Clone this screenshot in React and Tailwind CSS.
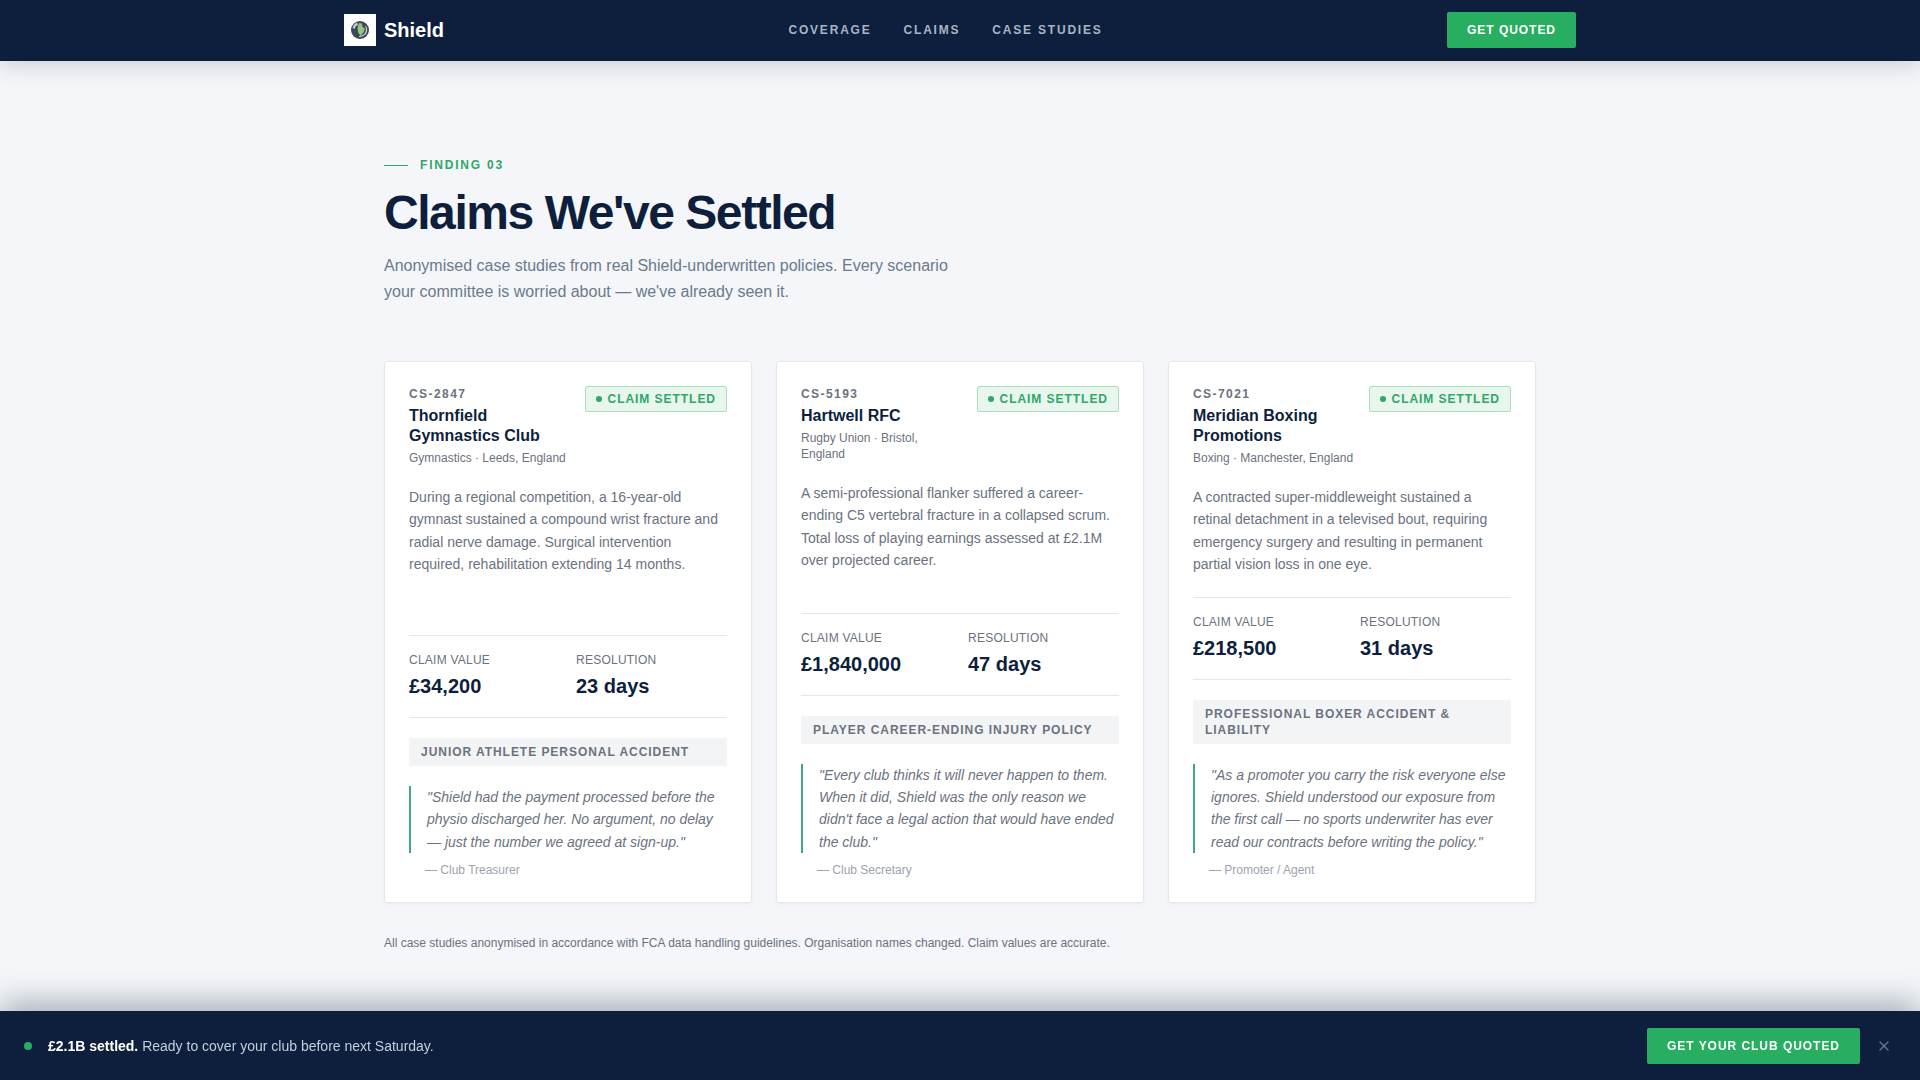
import React from 'react';
import { X } from 'lucide-react';

const cases = [
  {
    id: 'CS-2847',
    club: 'Thornfield Gymnastics Club',
    meta: 'Gymnastics · Leeds, England',
    summary: 'During a regional competition, a 16-year-old gymnast sustained a compound wrist fracture and radial nerve damage. Surgical intervention required, rehabilitation extending 14 months.',
    value: '£34,200',
    days: '23 days',
    policy: 'Junior Athlete Personal Accident',
    quote: '"Shield had the payment processed before the physio discharged her. No argument, no delay — just the number we agreed at sign-up."',
    who: '— Club Treasurer',
  },
  {
    id: 'CS-5193',
    club: 'Hartwell RFC',
    meta: 'Rugby Union · Bristol, England',
    summary: 'A semi-professional flanker suffered a career-ending C5 vertebral fracture in a collapsed scrum. Total loss of playing earnings assessed at £2.1M over projected career.',
    value: '£1,840,000',
    days: '47 days',
    policy: 'Player Career-Ending Injury Policy',
    quote: '"Every club thinks it will never happen to them. When it did, Shield was the only reason we didn\'t face a legal action that would have ended the club."',
    who: '— Club Secretary',
  },
  {
    id: 'CS-7021',
    club: 'Meridian Boxing Promotions',
    meta: 'Boxing · Manchester, England',
    summary: 'A contracted super-middleweight sustained a retinal detachment in a televised bout, requiring emergency surgery and resulting in permanent partial vision loss in one eye.',
    value: '£218,500',
    days: '31 days',
    policy: 'Professional Boxer Accident & Liability',
    quote: '"As a promoter you carry the risk everyone else ignores. Shield understood our exposure from the first call — no sports underwriter has ever read our contracts before writing the policy."',
    who: '— Promoter / Agent',
  },
];

function Logo() {
  return (
    <div className="flex h-8 w-8 items-center justify-center bg-white">
      <svg viewBox="0 0 20 20" className="h-[20px] w-[20px]">
        <circle cx="10" cy="10" r="9" fill="#3d4857" />
        <path d="M2.5 8 A8 8 0 0 1 7 2.5 L8 5 Q5 6 4.8 9 Z" fill="#c5cad1" />
        <path d="M15 6 Q17 9 15 13 Q13 16 9 16 L9 17 Q14 17 16.5 13 Q18 9 16 6 Z" fill="#ffffff" opacity="0.75" />
        <path d="M9 3 L12 3.5 L12.5 7 L15 8.5 L13.5 12.5 L10.5 16 L8 12 L7.5 8 Z" fill="#95c47f" />
      </svg>
    </div>
  );
}

function CaseCard({ item }) {
  return (
    <article className="flex flex-col rounded-[3px] border border-[#e5e7eb] bg-white p-6 shadow-[0_1px_3px_rgba(13,31,60,0.04)]">
      <header className="flex items-start justify-between gap-3">
        <div>
          <div className="text-xs leading-4 font-bold tracking-[0.12em] text-[#6b7280]">{item.id}</div>
          <h3 className="mt-1 text-base leading-5 font-bold text-[#0d1f3c]">{item.club}</h3>
          <p className="mt-1 text-xs leading-4 text-[#6b7280]">{item.meta}</p>
        </div>
        <span className="flex h-[26px] shrink-0 items-center gap-1.5 rounded-[2px] border border-[#a9dfc0] bg-[#e8f6ee] px-2.5 text-xs font-bold tracking-[0.08em] whitespace-nowrap text-[#2ea866]">
          <span className="h-1.5 w-1.5 rounded-full bg-[#2ea866]" />
          CLAIM SETTLED
        </span>
      </header>

      <p className="mt-5 mb-[21px] flex-1 text-sm leading-[22.4px] text-[#6b7280]">{item.summary}</p>

      <div className="grid grid-cols-2 gap-4 border-y border-[#e5e7eb] pt-4 pb-[17px]">
        <div>
          <div className="text-xs leading-4 tracking-[0.02em] text-[#6b7280] uppercase">Claim Value</div>
          <div className="mt-1 text-xl leading-7 font-bold text-[#0d1f3c]">{item.value}</div>
        </div>
        <div>
          <div className="text-xs leading-4 tracking-[0.02em] text-[#6b7280] uppercase">Resolution</div>
          <div className="mt-1 text-xl leading-7 font-bold text-[#0d1f3c]">{item.days}</div>
        </div>
      </div>

      <div className="mt-5 rounded-[2px] bg-[#f3f4f6] px-3 py-1.5 text-xs leading-4 font-bold tracking-[0.08em] text-[#6b7280] uppercase">
        {item.policy}
      </div>

      <blockquote className="mt-5 border-l-2 border-[#45a585] pl-4 text-sm leading-[22.4px] text-[#6b7280] italic">
        {item.quote}
      </blockquote>
      <p className="mt-[9px] pl-4 text-xs leading-4 text-[#9ca3af]">{item.who}</p>
    </article>
  );
}

export default function App() {
  return (
    <div className="min-h-screen bg-[#f4f6f9] font-['Liberation_Sans',Arial,sans-serif]">
      <nav className="sticky top-0 z-20 border-b border-[#0a1a33] bg-[#0d1f3c] shadow-[0_4px_24px_rgba(13,31,60,0.18)]">
        <div className="mx-auto flex h-[60px] max-w-[1232px] items-center justify-between">
          <div className="flex items-center gap-2">
            <Logo />
            <span className="text-xl font-bold text-white">Shield</span>
          </div>
          <div className="flex items-center gap-8 text-xs font-bold tracking-[0.15em] text-[#a9b4c4]">
            <a href="#coverage">COVERAGE</a>
            <a href="#claims">CLAIMS</a>
            <a href="#cases">CASE STUDIES</a>
          </div>
          <button className="h-9 rounded-[2px] bg-[#27ae60] px-5 text-xs font-bold tracking-[0.08em] text-white">GET QUOTED</button>
        </div>
      </nav>

      <main className="mx-auto max-w-[1152px] pt-[96px] pb-[130px]">
        <div className="flex items-center gap-3 text-xs leading-4 font-bold tracking-[0.15em] text-[#2ea866]">
          <span className="h-px w-6 bg-[#2ea866]" />
          FINDING 03
        </div>
        <h1 className="mt-[11px] text-5xl leading-[58px] font-bold tracking-[-0.03em] text-[#0d1f3c]">Claims We've Settled</h1>
        <p className="mt-[11px] max-w-[580px] text-base leading-[26px] text-[#6b7a8d]">
          Anonymised case studies from real Shield-underwritten policies. Every scenario your committee is worried about — we've already seen it.
        </p>

        <section className="mt-14 grid grid-cols-3 gap-6">
          {cases.map((item) => (
            <CaseCard key={item.id} item={item} />
          ))}
        </section>

        <p className="mt-8 text-xs leading-4 text-[#6b7280]">
          All case studies anonymised in accordance with FCA data handling guidelines. Organisation names changed. Claim values are accurate.
        </p>
      </main>

      <div className="fixed inset-x-0 bottom-0 z-30 flex h-[69px] items-center justify-between bg-[#0d1f3c] px-6 shadow-[0_-8px_32px_rgba(13,31,60,0.35)]">
        <div className="flex items-center gap-4 text-sm text-[#c3cddb]">
          <span className="h-2 w-2 rounded-full bg-[#27ae60]" />
          <span>
            <strong className="font-bold text-white">£2.1B settled.</strong> Ready to cover your club before next Saturday.
          </span>
        </div>
        <div className="flex items-center gap-3">
          <button className="h-9 rounded-[2px] bg-[#27ae60] px-5 text-xs font-bold tracking-[0.08em] text-white">GET YOUR CLUB QUOTED</button>
          <button className="p-1 text-[#65748d]" aria-label="Close">
            <X className="h-4 w-4" />
          </button>
        </div>
      </div>
    </div>
  );
}
